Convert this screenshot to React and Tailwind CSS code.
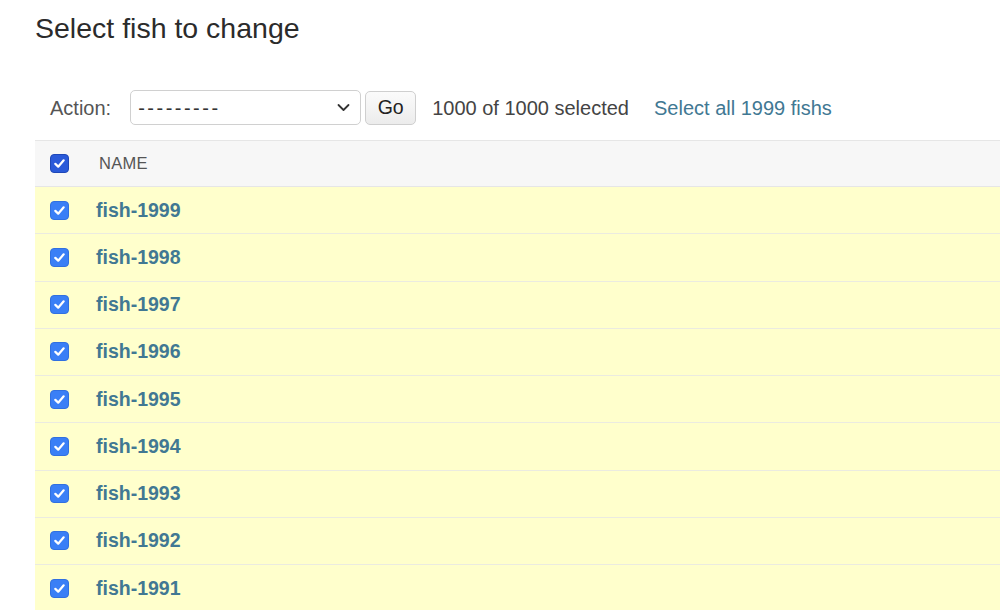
import React from 'react';

const fishes = [1999, 1998, 1997, 1996, 1995, 1994, 1993, 1992, 1991];

function Checkbox({ dark }) {
  return (
    <div
      className={
        dark
          ? 'w-[19px] h-[19px] rounded-[4px] bg-[#2a5ad9] border border-[#1f48b8] flex items-center justify-center'
          : 'w-[19px] h-[19px] rounded-[4px] bg-[#3a7ff6] border border-[#3170e0] flex items-center justify-center'
      }
    >
      <svg width="13" height="13" viewBox="0 0 14 14" fill="none">
        <path d="M2.5 7.4 L5.6 10.4 L11.5 3.6" stroke="white" strokeWidth="2.4" strokeLinecap="round" strokeLinejoin="round" />
      </svg>
    </div>
  );
}

export default function App() {
  return (
    <div className="w-[1000px] h-[610px] overflow-hidden bg-white font-['Liberation_Sans',Arial,sans-serif]">
      <div className="pl-[35px]">
        {/* Title */}
        <h1 className="pt-[14px] text-[28.5px] leading-[28px] text-[#2b2b2b]">Select fish to change</h1>

        {/* Actions */}
        <div className="mt-[48px] h-[35px] flex items-center pl-[15px] text-[20px]">
          <span className="text-[#555]">Action:</span>
          <div className="ml-[19px] w-[231px] h-[35px] rounded-[5px] border border-[#d0d0d0] bg-white flex items-center justify-between pl-[7px] pr-[10px]">
            <span className="text-[#333] tracking-[2.5px]">---------</span>
            <svg width="13" height="9" viewBox="0 0 13 9" fill="none">
              <path d="M1.5 2 L6.5 7 L11.5 2" stroke="#333" strokeWidth="1.8" strokeLinecap="round" strokeLinejoin="round" />
            </svg>
          </div>
          <button className="ml-[4px] w-[51px] h-[34px] rounded-[5px] border border-[#cfcfcf] bg-gradient-to-b from-[#fbfbfb] to-[#ececec] text-[#222] text-[19.5px]">
            Go
          </button>
          <span className="ml-[16px] text-[#444]">1000 of 1000 selected</span>
          <a className="ml-[25px] text-[#417893]">Select all 1999 fishs</a>
        </div>

        {/* Table */}
        <div className="mt-[15px]">
          <div className="h-[47px] box-border border-t border-b border-[#e6e6e6] bg-[#f7f7f7] flex items-center">
            <div className="pl-[15px]">
              <Checkbox dark />
            </div>
            <span className="ml-[30px] text-[16.5px] text-[#555] tracking-[0.3px]">NAME</span>
          </div>
          {fishes.map((n) => (
            <div key={n} className="h-[47.25px] box-border border-b border-[#ebebe0] bg-[#ffffcc] flex items-center">
              <div className="pl-[15px]">
                <Checkbox />
              </div>
              <a className="ml-[27px] text-[19.5px] font-bold text-[#417893]">fish-{n}</a>
            </div>
          ))}
        </div>
      </div>
    </div>
  );
}
